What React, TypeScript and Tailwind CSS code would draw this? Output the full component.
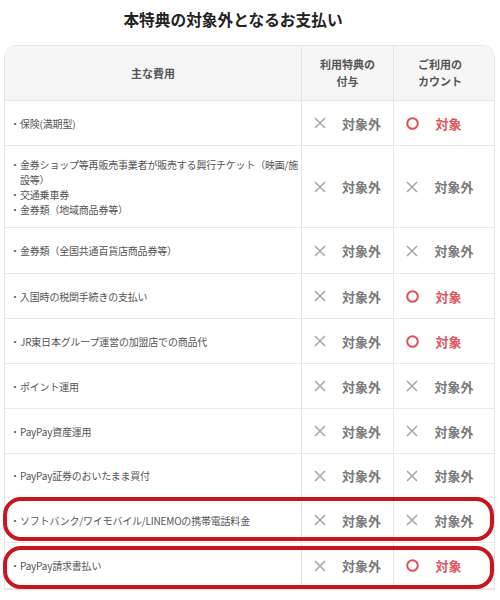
import React from "react";

type Mark = "x" | "o";
type Row = { items: string[][]; h: number; a: Mark; b: Mark };

const rows: Row[] = [
  { items: [["保険(満期型)"]], h: 45, a: "x", b: "o" },
  {
    items: [
      ["金券ショップ等再販売事業者が販売する興行チケット（映画/施", "設等）"],
      ["交通乗車券"],
      ["金券類（地域商品券等）"],
    ],
    h: 82,
    a: "x",
    b: "x",
  },
  { items: [["金券類（全国共通百貨店商品券等）"]], h: 46, a: "x", b: "x" },
  { items: [["入国時の税関手続きの支払い"]], h: 45, a: "x", b: "o" },
  { items: [["JR東日本グループ運営の加盟店での商品代"]], h: 45, a: "x", b: "o" },
  { items: [["ポイント運用"]], h: 45, a: "x", b: "x" },
  { items: [["PayPay資産運用"]], h: 45, a: "x", b: "x" },
  { items: [["PayPay証券のおいたまま買付"]], h: 44, a: "x", b: "x" },
  { items: [["ソフトバンク/ワイモバイル/LINEMOの携帯電話料金"]], h: 45, a: "x", b: "x" },
  { items: [["PayPay請求書払い"]], h: 46, a: "x", b: "o" },
];

const font = { fontFamily: '"Noto Sans CJK JP", "Noto Sans", sans-serif' };

function Cross() {
  return (
    <svg width="12" height="12" viewBox="0 0 12 12" className="shrink-0">
      <path d="M1 1 L11 11 M11 1 L1 11" stroke="#a8a8a8" strokeWidth="1.6" fill="none" />
    </svg>
  );
}

function Circle() {
  return (
    <svg width="13" height="13" viewBox="0 0 13 13" className="shrink-0">
      <circle cx="6.5" cy="6.5" r="5.3" stroke="#e0505a" strokeWidth="2" fill="none" />
    </svg>
  );
}

function MarkCell({ m, last }: { m: Mark; last?: boolean }) {
  return (
    <div
      className={
        "flex items-center justify-center gap-[16px] " +
        (last ? "pr-[8px]" : "border-r border-[#e6e6e6]")
      }
    >
      {m === "x" ? <Cross /> : <Circle />}
      {m === "x" ? (
        <span className="text-[13px] font-bold text-[#7a7a7a] leading-none">対象外</span>
      ) : (
        <span className="text-[13px] font-bold text-[#e0555d] leading-none pr-[12px]">対象</span>
      )}
    </div>
  );
}

export default function App() {
  return (
    <div className="relative w-[500px] h-[600px] bg-white overflow-hidden" style={font}>
      <div className="pt-[7px] h-[45px] text-center text-[15.7px] font-bold text-[#222] leading-[26px] pr-[34px]">
        本特典の対象外となるお支払い
      </div>
      <div className="ml-[4px] w-[491px] border border-[#e6e6e6] rounded-t-[12px] overflow-hidden">
        <div className="grid grid-cols-[297px_92px_100px] h-[55px] bg-[#f6f6f6] border-b border-[#e6e6e6]">
          <div className="flex items-center justify-center border-r border-[#e6e6e6] text-[11px] font-bold text-[#555]">
            主な費用
          </div>
          <div className="flex items-center justify-center border-r border-[#e6e6e6] text-center text-[11px] font-bold text-[#555] leading-[17px]">
            利用特典の
            <br />
            付与
          </div>
          <div className="flex items-center justify-center text-center text-[11px] font-bold text-[#555] leading-[17px] pr-[8px]">
            ご利用の
            <br />
            カウント
          </div>
        </div>
        {rows.map((r, i) => (
          <div
            key={i}
            className="grid grid-cols-[297px_92px_100px] border-b border-[#e9e9e9]"
            style={{ height: r.h }}
          >
            <div className="flex flex-col justify-center pl-[5px] border-r border-[#e6e6e6] text-[10px] text-[#555] leading-[15px]">
              {r.items.map((lines, j) => (
                <div key={j} className="flex">
                  <span className="w-[10px] shrink-0">・</span>
                  <div className="flex flex-col">
                    {lines.map((t, k) => (
                      <span key={k} className="whitespace-nowrap tracking-[-0.2px]">
                        {t}
                      </span>
                    ))}
                  </div>
                </div>
              ))}
            </div>
            <MarkCell m={r.a} />
            <MarkCell m={r.b} last />
          </div>
        ))}
      </div>
      <div className="absolute left-[3px] top-[497px] w-[491px] h-[44px] border-[4px] border-[#c9161e] rounded-[18px]" />
      <div className="absolute left-[3px] top-[546px] w-[491px] h-[43px] border-[4px] border-[#c9161e] rounded-[18px]" />
    </div>
  );
}
